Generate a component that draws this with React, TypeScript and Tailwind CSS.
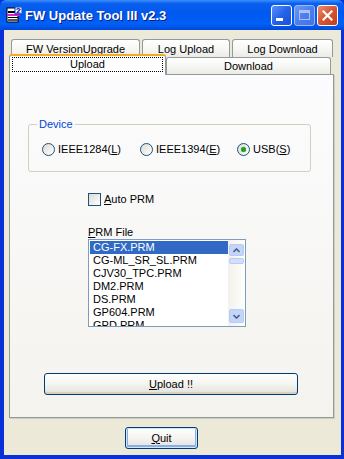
import React from 'react';

const ui = "font-['Liberation_Sans',Arial,sans-serif] text-[11px] leading-[13px] text-black";

const prmFiles = [
  'CG-FX.PRM',
  'CG-ML_SR_SL.PRM',
  'CJV30_TPC.PRM',
  'DM2.PRM',
  'DS.PRM',
  'GP604.PRM',
  'GPD.PRM',
];

// title bar icon — small printer sheet with magenta stripe
function AppIcon() {
  return (
    <svg width="16" height="16" viewBox="0 0 16 16">
      <rect x="1" y="1" width="11" height="14" fill="#fff" stroke="#000" strokeWidth="1" />
      <rect x="2" y="4" width="9" height="2" fill="#000" />
      <rect x="1" y="7" width="13" height="2" fill="#E020D0" />
      <rect x="2" y="10" width="10" height="1" fill="#000" />
      <rect x="2" y="12" width="10" height="2" fill="#555" />
      <rect x="9" y="0" width="7" height="7" fill="#fff" stroke="#1030B0" strokeWidth="1" />
      <path d="M10.5 2.5 Q12.5 0.8 14 2.5 L11 6 L14.5 6" fill="none" stroke="#1030B0" strokeWidth="1.2" />
    </svg>
  );
}

function CaptionButtons() {
  return (
    <div className="flex items-center gap-[2px]">
      <div className="w-[21px] h-[21px] rounded-[3px] border border-white bg-gradient-to-br from-[#5C8EF8] via-[#2462EA] to-[#1E50D8] flex items-end pl-[4px] pb-[4px]">
        <div className="w-[7px] h-[3px] bg-white" />
      </div>
      <div className="w-[21px] h-[21px] rounded-[3px] border border-[#9DB9F5] bg-gradient-to-br from-[#6E9AF5] via-[#4C7DED] to-[#4472E6] flex items-center justify-center">
        <div className="w-[11px] h-[10px] border border-[#A9C1F6] border-t-[3px]" />
      </div>
      <div className="w-[21px] h-[21px] rounded-[3px] border border-white bg-gradient-to-br from-[#E98A6C] via-[#D9542F] to-[#C23E1A] flex items-center justify-center">
        <svg width="11" height="11" viewBox="0 0 11 11">
          <path d="M1.5 1.5 L9.5 9.5 M9.5 1.5 L1.5 9.5" stroke="#fff" strokeWidth="2.2" strokeLinecap="square" />
        </svg>
      </div>
    </div>
  );
}

function Tab({ label, w, selected = false }: { label: string; w: number; selected?: boolean }) {
  if (selected) {
    return (
      <div
        className="relative z-10 -mb-px h-[21px] bg-white border border-b-0 border-[#919B9C] border-t-2 border-t-[#F5A823] rounded-t-[3px] px-[2px] pt-[1px] pb-[3px] flex"
        style={{ width: w }}
      >
        <div className="flex-1 border border-dotted border-black flex items-center justify-center">{label}</div>
      </div>
    );
  }
  return (
    <div
      className="h-[18px] border border-b-0 border-[#919B9C] rounded-t-[3px] bg-gradient-to-b from-white via-[#F7F7F4] to-[#ECEBE6] flex items-center justify-center pt-px"
      style={{ width: w }}
    >
      {label}
    </div>
  );
}

function Radio({ label, hot, checked = false, w }: { label: string; hot: string; checked?: boolean; w: number }) {
  return (
    <div className="flex items-center" style={{ width: w }}>
      <div className="w-[13px] h-[13px] rounded-full border border-[#1C5180] bg-gradient-to-br from-[#DCDBD3] to-white flex items-center justify-center">
        {checked && <div className="w-[5px] h-[5px] rounded-full bg-[#21A121] shadow-[0_0_1px_#6BD36B]" />}
      </div>
      <span className="ml-[3px]">
        {label.replace(`(${hot})`, '')}(<span className="underline">{hot}</span>)
      </span>
    </div>
  );
}

function XpButton({ children, w, focused = false }: { children: React.ReactNode; w: number; focused?: boolean }) {
  return (
    <div
      className={`h-[22px] rounded-[3px] border border-[#003C74] bg-gradient-to-b from-white via-[#F4F4F0] to-[#E3E2DA] flex items-center justify-center ${
        focused ? 'shadow-[inset_0_0_0_1px_#CEE7FF,inset_0_-1px_0_2px_#89ADE4]' : 'shadow-[inset_0_-2px_0_#D6D0C5]'
      }`}
      style={{ width: w }}
    >
      {children}
    </div>
  );
}

export default function App() {
  return (
    <div className={`${ui} w-[344px] h-[459px] flex flex-col bg-[#0831D9]`}>
      {/* Title bar */}
      <div className="h-[30px] shrink-0 flex items-center pl-[6px] pr-[6px] rounded-t-[6px] bg-[linear-gradient(180deg,#3D8FFF_0%,#0A5FEE_12%,#0058EE_45%,#0060F8_80%,#0049D6_100%)]">
        <AppIcon />
        <span className="ml-[3px] font-['Liberation_Sans',Arial,sans-serif] font-bold text-[13px] text-white [text-shadow:1px_1px_0_#0A1E80]">
          FW Update Tool III v2.3
        </span>
        <div className="ml-auto">
          <CaptionButtons />
        </div>
      </div>

      {/* Body */}
      <div className="flex-1 ml-[4px] mr-[3px] mb-[4px] bg-[#ECE9D8] flex flex-col pt-[9px]">
        {/* Tab rows */}
        <div className="flex gap-[2px] pl-[7px]">
          <Tab label="FW VersionUpgrade" w={129} />
          <Tab label="Log Upload" w={88} />
          <Tab label="Log Download" w={101} />
        </div>
        <div className="flex items-end pl-[5px] -mt-[3px] h-[20px]">
          <Tab label="Upload" w={157} selected />
          <div className="h-[17px] w-[165px] border border-b-0 border-[#919B9C] rounded-t-[3px] bg-gradient-to-b from-white via-[#F7F7F4] to-[#ECEBE6] flex items-center justify-center">
            Download
          </div>
        </div>

        {/* Panel */}
        <div className="ml-[5px] w-[325px] h-[344px] border border-[#919B9C] bg-gradient-to-b from-[#FCFCFE] to-[#F4F3EE] shadow-[1px_1px_0_#D0CEBF] flex flex-col pl-[18px]">
          <fieldset className="mt-[43px] w-[276px] h-[54px] border border-[#D0D0BF] rounded-[3px] px-[13px]">
            <legend className="ml-[-5px] px-[2px] text-[#0046D5]">Device</legend>
            <div className="flex items-center mt-[12px]">
              <Radio label="IEEE1284(L)" hot="L" w={98} />
              <Radio label="IEEE1394(E)" hot="E" w={97} />
              <Radio label="USB(S)" hot="S" w={60} checked />
            </div>
          </fieldset>

          <div className="ml-[60px] mt-[21px] flex items-center">
            <div className="w-[13px] h-[13px] border border-[#1C5180] bg-gradient-to-br from-[#DCDBD3] to-white" />
            <span className="ml-[3px]">
              <span className="underline">A</span>uto PRM
            </span>
          </div>

          <div className="ml-[60px] mt-[20px]">
            <span className="underline">P</span>RM File
          </div>
          <div className="ml-[60px] w-[158px] h-[88px] border border-[#7F9DB9] bg-white flex overflow-hidden">
            <div className="flex-1 pt-px pl-px">
              {prmFiles.map((f, i) => (
                <div key={f} className={`h-[13px] pl-[3px] ${i === 0 ? 'bg-[#316AC5] text-white' : ''}`}>
                  {f}
                </div>
              ))}
            </div>
            <div className="w-[17px] flex flex-col bg-gradient-to-r from-[#F3F1EC] to-[#FEFEFB] pt-[4px] pb-[3px]">
              <div className="h-[12px] mx-px rounded-[2px] border border-[#B6CBF7] bg-[#C4D5FC] flex items-center justify-center">
                <svg width="7" height="5" viewBox="0 0 7 5"><path d="M0.5 4 L3.5 1 L6.5 4" fill="none" stroke="#4D6185" strokeWidth="1.6" /></svg>
              </div>
              <div className="h-[6px] mt-[2px] mx-px rounded-[2px] border border-[#B6CBF7] bg-[#D3E0FC]" />
              <div className="flex-1" />
              <div className="h-[14px] mx-px rounded-[2px] border border-[#B6CBF7] bg-[#C4D5FC] flex items-center justify-center">
                <svg width="7" height="5" viewBox="0 0 7 5"><path d="M0.5 1 L3.5 4 L6.5 1" fill="none" stroke="#4D6185" strokeWidth="1.6" /></svg>
              </div>
            </div>
          </div>

          <div className="ml-[16px] mt-[46px]">
            <XpButton w={254}>
              <span>
                <span className="underline">U</span>pload !!
              </span>
            </XpButton>
          </div>
        </div>

        {/* Quit */}
        <div className="mt-[9px] pl-[121px]">
          <XpButton w={73} focused>
            <span>
              <span className="underline">Q</span>uit
            </span>
          </XpButton>
        </div>
      </div>
    </div>
  );
}
